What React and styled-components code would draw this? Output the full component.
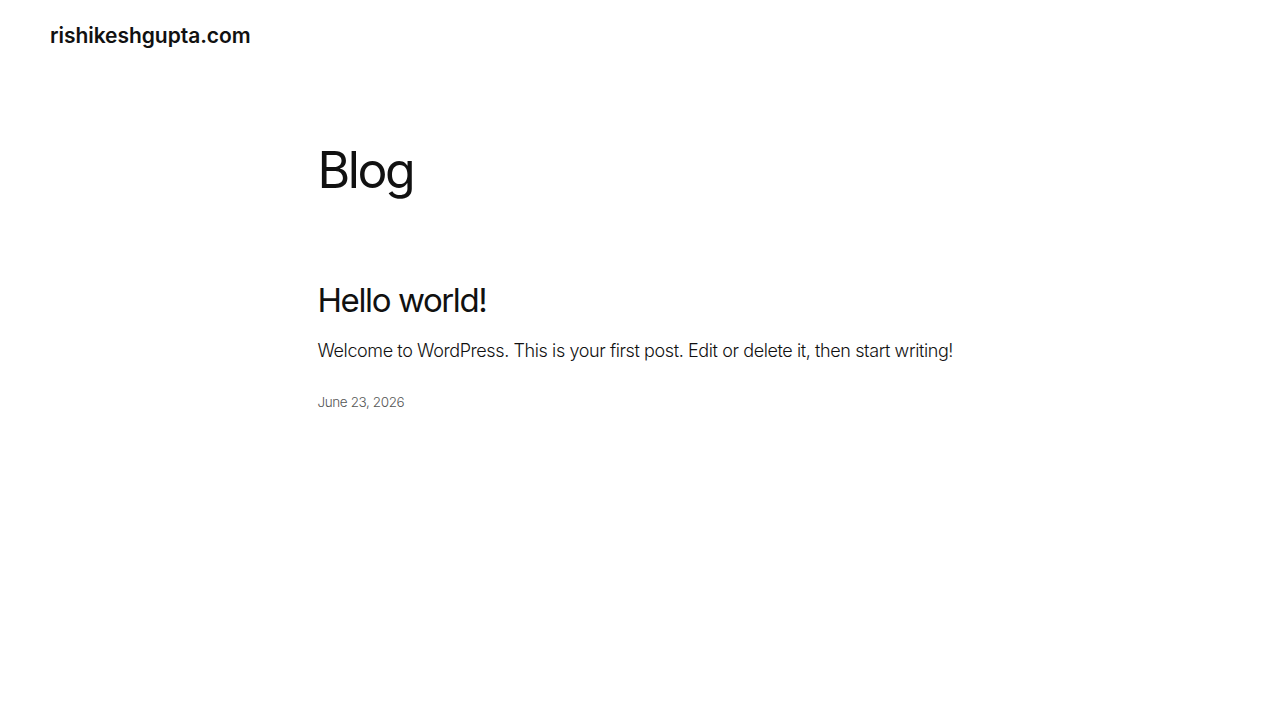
import React from 'react';
import styled, { createGlobalStyle } from 'styled-components';

const GlobalStyle = createGlobalStyle`
  html, body {
    margin: 0;
    padding: 0;
    background: #ffffff;
  }
  body {
    font-family: Inter, "Noto Sans", "Liberation Sans", sans-serif;
    color: #111111;
    -webkit-font-smoothing: antialiased;
  }
`;

const Page = styled.div`
  min-height: 100vh;
  background: #fff;
`;

const Header = styled.header`
  display: flex;
  align-items: center;
  height: 70px;
  padding: 0 50px;
`;

const SiteTitle = styled.a`
  font-size: 21px;
  font-weight: 600;
  letter-spacing: -0.05px;
  color: #111;
  text-decoration: none;
`;

const Main = styled.main`
  width: 645px;
  margin: 0 auto;
  padding-top: 70px;
`;

const PageTitle = styled.h1`
  margin: 0;
  font-size: 50px;
  font-weight: 400;
  letter-spacing: -2.4px;
  line-height: 1.2;
`;

const PostList = styled.ul`
  list-style: none;
  margin: 81px 0 0;
  padding: 0;
`;

const Post = styled.li`
  display: flex;
  flex-direction: column;
`;

const PostTitle = styled.h2`
  margin: 0;
  font-size: 33px;
  font-weight: 400;
  letter-spacing: -1.4px;
  line-height: 1.2;

  a {
    color: inherit;
    text-decoration: none;
  }
`;

const Excerpt = styled.p`
  margin: 16px 0 0;
  font-size: 18px;
  font-weight: 300;
  line-height: 1.5;
  letter-spacing: -0.4px;
  white-space: nowrap;
`;

const PostDate = styled.time`
  margin-top: 29px;
  font-size: 13.5px;
  font-weight: 300;
  letter-spacing: -0.4px;
  color: #555;
  line-height: 1.4;
`;

const App = () => {
  return (
    <Page>
      <GlobalStyle />
      <Header>
        <SiteTitle href="#">rishikeshgupta.com</SiteTitle>
      </Header>
      <Main>
        <PageTitle>Blog</PageTitle>
        <PostList>
          <Post>
            <PostTitle>
              <a href="#">Hello world!</a>
            </PostTitle>
            <Excerpt>
              Welcome to WordPress. This is your first post. Edit or delete it, then start writing!
            </Excerpt>
            <PostDate>June 23, 2026</PostDate>
          </Post>
        </PostList>
      </Main>
    </Page>
  );
};

export default App;
